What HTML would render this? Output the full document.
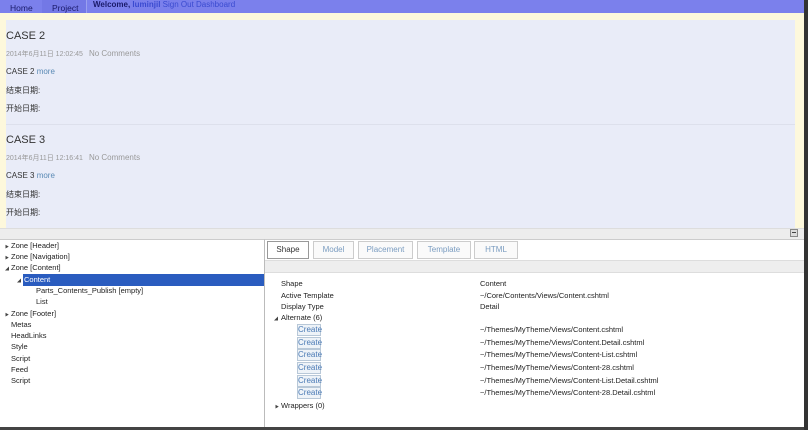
<!DOCTYPE html>
<html><head><meta charset="utf-8"><style>
*{margin:0;padding:0;box-sizing:border-box}
body{width:808px;height:430px;overflow:hidden;background:#fdf8dc;font-family:"Liberation Sans","Noto Sans CJK SC",sans-serif;position:relative;color:#333}
.a{position:absolute;white-space:nowrap}
#top{left:0;top:0;width:804px;height:13px;background:#7b80ec}
#main{left:6px;top:20px;width:789px;height:209px;background:#e9ecf8}
.h{font-size:11px;color:#333}
.m{font-size:7px;color:#999}
.m span{font-size:8px;margin-left:6px}
.t{font-size:8px;color:#333}
.lk{color:#5a8ab5}
#bar{left:0;top:228px;width:804px;height:11px;background:#ededed;border-top:1px solid #ddd}
#left{left:0;top:239px;width:265px;height:188px;background:#fff;border-right:1px solid #bbb;border-top:1px solid #ccc}
#right{left:265px;top:239px;width:539px;height:188px;background:#fff;border-top:1px solid #ccc}
#bot{left:0;top:427px;width:808px;height:3px;background:#444}
#rb{left:804px;top:0;width:4px;height:430px;background:#333}
.tr{font-size:7.5px;color:#222}
.tab{top:241px;height:18px;border:1px solid #ccc;font-size:8px;color:#7a9cc0;text-align:center;line-height:16px;background:#fafafa}
.r{font-size:7.5px;color:#222}
.c{font-size:8px;color:#4a7ab5;border:1px solid #b8c8d8;background:#eef3f8;width:24px;height:12px;line-height:10px;text-align:center;left:297px}
.tri{font-size:4px;color:#444}
</style></head><body>
<div class="a" id="top"></div>
<div class="a" style="left:10px;top:3px;font-size:8.5px;color:#1a1a6a">Home</div>
<div class="a" style="left:42px;top:0;width:44px;height:13px;background:#7378e6"></div>
<div class="a" style="left:52px;top:3px;font-size:8.5px;color:#1a1a6a">Project</div>
<div class="a" style="left:86px;top:0;width:1px;height:13px;background:#9aa0f0"></div>
<div class="a" style="left:93px;top:0;font-size:8px;color:#1a1a6a;font-weight:bold">Welcome, <span style="color:#3a4ad0">luminjil</span> <span style="font-weight:normal;color:#3a4ad0">Sign Out Dashboard</span></div>
<div class="a" id="main"></div>
<div class="a" style="left:6px;top:124px;width:789px;height:1px;background:#dde0ec"></div>
<div class="a h" style="left:6px;top:30px">CASE 2</div>
<div class="a m" style="left:6px;top:49px">2014年6月11日 12:02:45<span>No Comments</span></div>
<div class="a t" style="left:6px;top:67px">CASE 2 <span class="lk">more</span></div>
<div class="a t" style="left:6px;top:85px">结束日期:</div>
<div class="a t" style="left:6px;top:103px">开始日期:</div>
<div class="a h" style="left:6px;top:134px">CASE 3</div>
<div class="a m" style="left:6px;top:153px">2014年6月11日 12:16:41<span>No Comments</span></div>
<div class="a t" style="left:6px;top:171px">CASE 3 <span class="lk">more</span></div>
<div class="a t" style="left:6px;top:189px">结束日期:</div>
<div class="a t" style="left:6px;top:207px">开始日期:</div>
<div class="a" id="bar"></div>
<div class="a" style="left:790px;top:229px;width:8px;height:8px;border:1px solid #888;background:#ddd"></div>
<div class="a" style="left:792px;top:232px;width:4px;height:1px;background:#444"></div>
<div class="a" id="left"></div>
<div class="a" id="right"></div>
<div class="a" style="left:265px;top:260px;width:539px;height:13px;background:#eee;border-top:1px solid #ddd;border-bottom:1px solid #ddd"></div>
<div class="a" style="left:23px;top:274px;width:241px;height:12px;background:#2a5cbf"></div>
<div class="a tri" style="left:5px;top:244px">▶</div><div class="a tr" style="left:11px;top:241px">Zone [Header]</div>
<div class="a tri" style="left:5px;top:255px">▶</div><div class="a tr" style="left:11px;top:252px">Zone [Navigation]</div>
<div class="a tri" style="left:5px;top:266px">◢</div><div class="a tr" style="left:11px;top:263px">Zone [Content]</div>
<div class="a tri" style="left:17px;top:278px">◢</div><div class="a tr" style="left:24px;top:275px;color:#fff">Content</div>
<div class="a tr" style="left:36px;top:286px">Parts_Contents_Publish [empty]</div>
<div class="a tr" style="left:36px;top:297px">List</div>
<div class="a tri" style="left:5px;top:312px">▶</div><div class="a tr" style="left:11px;top:309px">Zone [Footer]</div>
<div class="a tr" style="left:11px;top:320px">Metas</div>
<div class="a tr" style="left:11px;top:331px">HeadLinks</div>
<div class="a tr" style="left:11px;top:342px">Style</div>
<div class="a tr" style="left:11px;top:354px">Script</div>
<div class="a tr" style="left:11px;top:365px">Feed</div>
<div class="a tr" style="left:11px;top:376px">Script</div>
<div class="a tab" style="left:267px;width:42px;color:#333;border-color:#999;background:#fff">Shape</div>
<div class="a tab" style="left:313px;width:41px">Model</div>
<div class="a tab" style="left:358px;width:55px">Placement</div>
<div class="a tab" style="left:417px;width:54px">Template</div>
<div class="a tab" style="left:474px;width:44px">HTML</div>
<div class="a r" style="left:281px;top:279px">Shape</div><div class="a r" style="left:480px;top:279px">Content</div>
<div class="a r" style="left:281px;top:291px">Active Template</div><div class="a r lk" style="left:480px;top:291px">~/Core/Contents/Views/Content.cshtml</div>
<div class="a r" style="left:281px;top:302px">Display Type</div><div class="a r" style="left:480px;top:302px">Detail</div>
<div class="a tri" style="left:274px;top:316px">◢</div><div class="a r" style="left:281px;top:313px">Alternate (6)</div>
<div class="a c" style="top:324px">Create</div><div class="a r" style="left:480px;top:325px">~/Themes/MyTheme/Views/Content.cshtml</div>
<div class="a c" style="top:337px">Create</div><div class="a r" style="left:480px;top:338px">~/Themes/MyTheme/Views/Content.Detail.cshtml</div>
<div class="a c" style="top:349px">Create</div><div class="a r" style="left:480px;top:350px">~/Themes/MyTheme/Views/Content-List.cshtml</div>
<div class="a c" style="top:362px">Create</div><div class="a r" style="left:480px;top:363px">~/Themes/MyTheme/Views/Content-28.cshtml</div>
<div class="a c" style="top:375px">Create</div><div class="a r" style="left:480px;top:376px">~/Themes/MyTheme/Views/Content-List.Detail.cshtml</div>
<div class="a c" style="top:387px">Create</div><div class="a r" style="left:480px;top:388px">~/Themes/MyTheme/Views/Content-28.Detail.cshtml</div>
<div class="a tri" style="left:275px;top:404px">▶</div><div class="a r" style="left:281px;top:401px">Wrappers (0)</div>
<div class="a" id="bot"></div>
<div class="a" id="rb"></div>
</body></html>
